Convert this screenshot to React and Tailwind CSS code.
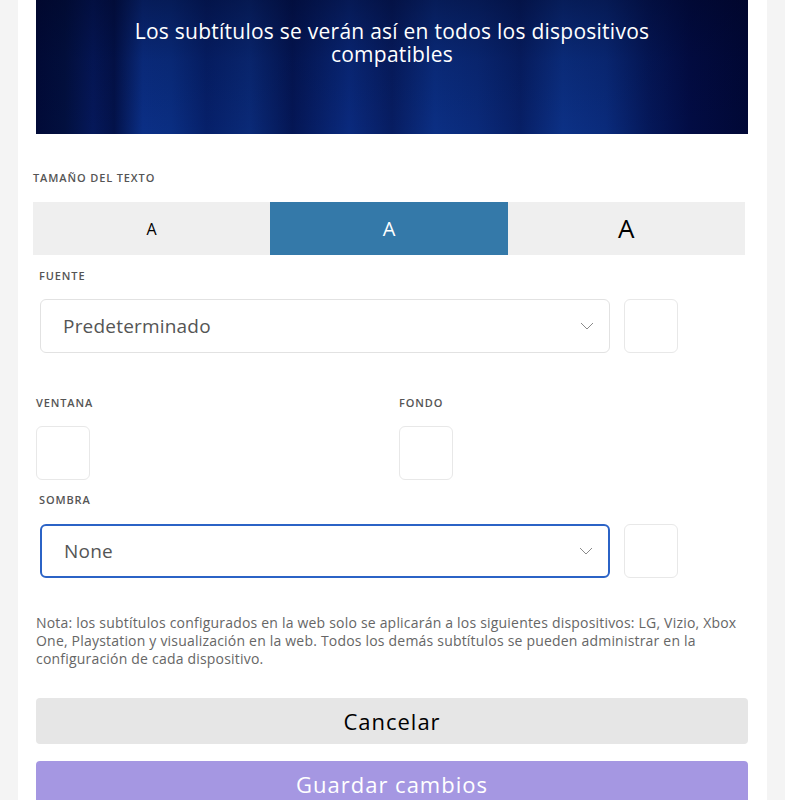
import React from "react";

function Chevron() {
  return (
    <svg width="14" height="8" viewBox="0 0 14 8" fill="none" className="shrink-0">
      <path d="M1 1l6 6 6-6" stroke="#8a8a8a" strokeWidth="1" />
    </svg>
  );
}

function Label({ children, className = "" }) {
  return (
    <div className={"text-[11px] font-semibold tracking-[0.08em] leading-[14px] text-[#555] uppercase " + className}>
      {children}
    </div>
  );
}

function Select({ value, active }) {
  return (
    <div className="flex items-center gap-[14px]">
      <div
        className={
          "flex h-[54px] w-[570px] items-center justify-between rounded-[6px] bg-white pl-[22px] pr-[15px] " +
          (active ? "border-2 border-[#2b63c6]" : "border border-[#e2e2e2]")
        }
      >
        <span className="text-[19px] tracking-[0.2px] text-[#555]">{value}</span>
        <Chevron />
      </div>
      <Swatch />
    </div>
  );
}

function Swatch() {
  return <div className="h-[54px] w-[54px] rounded-[6px] border border-[#e8e8e8] bg-white" />;
}

export default function App() {
  return (
    <div
      className="min-h-screen w-full bg-[#f4f4f4] px-[18px]"
      style={{ fontFamily: '"Open Sans", "Liberation Sans", sans-serif' }}
    >
      <div className="h-[800px] overflow-hidden bg-white px-[18px]">
        {/* Banner */}
        <div className="relative h-[134px] w-[712px] overflow-hidden bg-[linear-gradient(90deg,#010a38_0%,#02103f_4%,#05185a_8%,#03124a_11%,#0b2f86_15%,#0a2e82_19%,#06206a_24%,#0a2a78_30%,#041655_36%,#0a2a7e_44%,#071d62_50%,#0b2f84_56%,#0a2a7a_62%,#071f66_68%,#0c3186_74%,#0a2b7c_80%,#05185a_86%,#020c44_92%,#010836_100%)]">
          <div className="absolute inset-0 bg-[linear-gradient(180deg,rgba(0,5,35,0.45)_0%,rgba(0,5,35,0.15)_45%,rgba(0,5,35,0)_100%)]" />
          <div className="relative px-[60px] pt-[20px] text-center text-[21px] leading-[23px] tracking-[0.25px] text-white">
            Los subtítulos se verán así en todos los dispositivos compatibles
          </div>
        </div>

        {/* Text size */}
        <Label className="ml-[-3px] mt-[37px]">Tamaño del texto</Label>
        <div className="ml-[-3px] mt-[17px] grid h-[53px] w-[712px] grid-cols-3">
          <div className="flex items-center justify-center bg-[#efefef] text-[16px] font-medium text-black">A</div>
          <div className="flex items-center justify-center bg-[#3479a9] text-[20px] font-medium text-white">A</div>
          <div className="flex items-center justify-center bg-[#efefef] text-[26px] font-medium text-black">A</div>
        </div>

        {/* Fuente */}
        <Label className="ml-[3px] mt-[14px]">Fuente</Label>
        <div className="ml-[4px] mt-[16px]">
          <Select value="Predeterminado" />
        </div>

        {/* Ventana / Fondo */}
        <div className="mt-[43px] flex">
          <div className="w-[363px]">
            <Label>Ventana</Label>
            <div className="mt-[16px]">
              <Swatch />
            </div>
          </div>
          <div>
            <Label>Fondo</Label>
            <div className="mt-[16px]">
              <Swatch />
            </div>
          </div>
        </div>

        {/* Sombra */}
        <Label className="ml-[3px] mt-[13px]">Sombra</Label>
        <div className="ml-[4px] mt-[17px]">
          <Select value="None" active />
        </div>

        {/* Note */}
        <p className="mt-[36px] w-[712px] text-[14px] leading-[18px] tracking-[0.2px] text-[#666]">
          Nota: los subtítulos configurados en la web solo se aplicarán a los siguientes dispositivos: LG, Vizio, Xbox One, Playstation y visualización en la web. Todos los demás subtítulos se pueden administrar en la configuración de cada dispositivo.
        </p>

        {/* Buttons */}
        <div className="mt-[30px] flex h-[46px] w-[712px] items-center justify-center rounded-[4px] bg-[#e6e6e6] text-[22px] font-medium tracking-[1px] text-black">
          Cancelar
        </div>
        <div className="mt-[17px] flex h-[46px] w-[712px] items-center justify-center rounded-[4px] bg-[#a597e2] text-[22px] font-medium tracking-[1px] text-white">
          Guardar cambios
        </div>
      </div>
    </div>
  );
}
